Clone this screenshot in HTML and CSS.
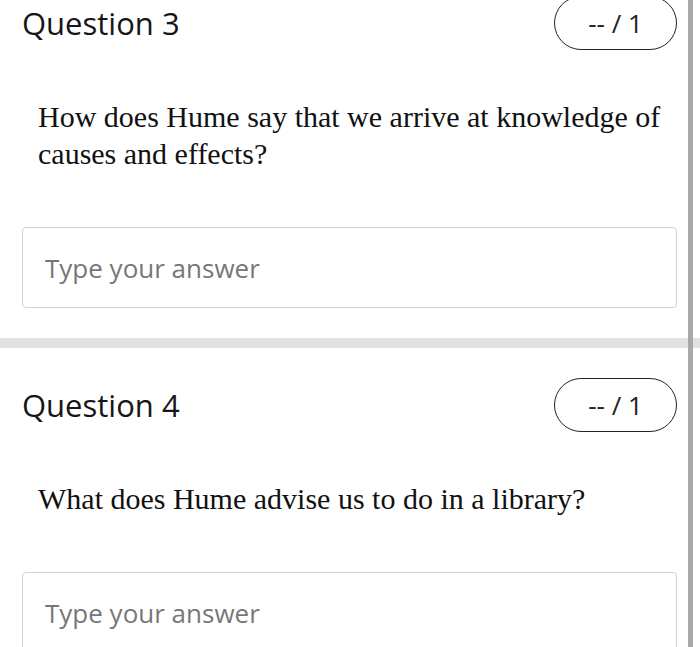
FILE: index.html
```html
<!DOCTYPE html>
<html>
<head>
<meta charset="utf-8">
<link rel="stylesheet" href="styles.css">
</head>
<body>
<div class="page">
  <section class="question q3">
    <div class="q-head">
      <h2 class="q-title">Question 3</h2>
      <div class="score">-- / 1</div>
    </div>
    <p class="q-text">How does Hume say that we arrive at knowledge of causes and effects?</p>
    <div class="answer">Type your answer</div>
  </section>
  <div class="divider"></div>
  <section class="question q4">
    <div class="q-head">
      <h2 class="q-title">Question 4</h2>
      <div class="score">-- / 1</div>
    </div>
    <p class="q-text">What does Hume advise us to do in a library?</p>
    <div class="answer">Type your answer</div>
  </section>
</div>
<div class="scrollbar"></div>
</body>
</html>
```
FILE: styles.css
```css
html, body {
  margin: 0;
  padding: 0;
  background: #ffffff;
  overflow: hidden;
}
body {
  width: 700px;
  height: 647px;
  position: relative;
}
.page {
  width: 688px;
  display: flex;
  flex-direction: column;
}
.question {
  padding: 0 11px 0 22px;
  display: flex;
  flex-direction: column;
}
.q3 {
  margin-top: -4px;
  padding-bottom: 30px;
}
.q4 {
  padding-top: 30px;
}
.q-head {
  display: flex;
  justify-content: space-between;
  align-items: center;
  height: 54px;
}
.q-title {
  margin: 0;
  font-family: "Open Sans", sans-serif;
  font-weight: 400;
  font-size: 31px;
  color: #161616;
  line-height: 54px;
}
.score {
  box-sizing: border-box;
  width: 123px;
  height: 54px;
  border: 1.5px solid #222;
  border-radius: 27px;
  display: flex;
  align-items: center;
  justify-content: center;
  font-family: "Open Sans", sans-serif;
  font-size: 26px;
  color: #222;
}
.q-text {
  margin: 48px 0 0 16px;
  font-family: "Liberation Serif", "Times New Roman", serif;
  font-size: 30px;
  line-height: 37px;
  color: #111;
}
.answer {
  box-sizing: border-box;
  margin-top: 55px;
  height: 81px;
  border: 1.5px solid #d2d2d2;
  border-radius: 4px;
  padding-left: 22px;
  display: flex;
  align-items: center;
  font-family: "Open Sans", sans-serif;
  font-size: 26px;
  color: #777;
}
.divider {
  height: 10px;
  background: #e2e2e2;
  width: 700px;
}
.scrollbar {
  position: absolute;
  top: 0;
  left: 688px;
  width: 5px;
  height: 647px;
  background: #a8a8a8;
}
```
